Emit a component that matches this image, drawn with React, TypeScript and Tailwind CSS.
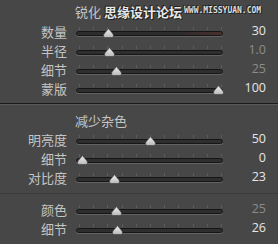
const cjk = { fontFamily: '"Noto Sans CJK SC", "Noto Sans", sans-serif' };
const num = { fontFamily: '"Open Sans", "Liberation Sans", sans-serif' };

type Row = { label: string; value: string; pos: number; dim?: boolean; warm?: boolean };

const sharpen: Row[] = [
  { label: "数量", value: "30", pos: 32, warm: true },
  { label: "半径", value: "1.0", pos: 33, dim: true },
  { label: "细节", value: "25", pos: 40, dim: true },
  { label: "蒙版", value: "100", pos: 142 },
];

const noise: Row[] = [
  { label: "明亮度", value: "50", pos: 74 },
  { label: "细节", value: "0", pos: 6 },
  { label: "对比度", value: "23", pos: 38 },
];

const color: Row[] = [
  { label: "颜色", value: "25", pos: 40, dim: true },
  { label: "细节", value: "26", pos: 41 },
];

const ticks = [0, 1, 2, 3, 4, 5, 6, 7, 8, 9, 10];

function Thumb() {
  return (
    <svg width="11" height="10" viewBox="0 0 11 10" className="block">
      <defs>
        <linearGradient id="tg" x1="0" y1="0" x2="0" y2="1">
          <stop offset="0" stopColor="#f2f2f2" />
          <stop offset="1" stopColor="#b8b8b8" />
        </linearGradient>
      </defs>
      <path d="M5.5 0.5 C6.5 2.5 10.5 5.5 10.5 7.5 C10.5 9 9.5 9.5 8.5 9.5 L2.5 9.5 C1.5 9.5 0.5 9 0.5 7.5 C0.5 5.5 4.5 2.5 5.5 0.5 Z" fill="url(#tg)" stroke="#3a3a3a" strokeWidth="0.6" />
    </svg>
  );
}

function Slider({ row }: { row: Row }) {
  return (
    <div className="flex h-[19px] items-center">
      <div className="w-[67px] whitespace-nowrap text-right text-[13px] leading-none text-[#c4c4c4]" style={cjk}>
        {row.label}
      </div>
      <div className="relative ml-[9px] h-full w-[147px]">
        {ticks.map((t) => (
          <div
            key={t}
            className="absolute top-[5px] h-[3px] w-px bg-[#5c5c5c]"
            style={{ left: 3 + t * 14.2 }}
          />
        ))}
        <div
          className={`absolute top-[9px] h-[5px] w-full rounded-full border border-[#161616] shadow-[0_1px_0_#626262] ${
            row.warm ? "bg-gradient-to-r from-[#2c2c2c] from-70% to-[#4a2f2c]" : "bg-[#2e2e2e]"
          }`}
        />
        <div className="absolute top-[6px]" style={{ left: row.pos - 5 }}>
          <Thumb />
        </div>
      </div>
      <div
        className={`ml-auto mr-[12px] text-[12.5px] leading-none ${row.dim ? "text-[#8c8c8c]" : "text-[#e6e6e6]"}`}
        style={num}
      >
        {row.value}
      </div>
    </div>
  );
}

export default function App() {
  return (
    <div className="h-[244px] w-[278px] overflow-hidden bg-[#474747]">
      <div className="flex h-[22px] items-center whitespace-nowrap">
        <span className="ml-[75px] shrink-0 text-[13px] leading-none text-[#c4c4c4]" style={cjk}>
          锐化
        </span>
        <span
          className="ml-[3px] shrink-0 text-[13px] font-bold leading-none text-[#e8e8e8] [text-shadow:0_0_1px_#111,1px_1px_0_#222,-1px_-1px_0_#222]"
          style={cjk}
        >
          思缘设计论坛
        </span>
        <span
          className="ml-[2px] shrink-0 text-[8px] font-bold leading-none text-[#dcdcdc] [text-shadow:1px_1px_0_#222,-1px_-1px_0_#222]"
          style={{ fontFamily: '"DejaVu Sans Mono", monospace' }}
        >
          WWW.MISSYUAN.COM
        </span>
      </div>
      {sharpen.map((r) => (
        <Slider key={r.label} row={r} />
      ))}
      <div className="mt-[5px] h-px bg-[#1b1b1b]" />
      <div className="h-px bg-[#595959]" />
      <div className="mt-[6px] flex h-[19px] items-center">
        <span className="ml-[75px] text-[13px] leading-none text-[#c4c4c4]" style={cjk}>
          减少杂色
        </span>
      </div>
      {noise.map((r) => (
        <Slider key={r.label + r.value} row={r} />
      ))}
      <div className="mt-[6px] h-px bg-[#3c3c3c]" />
      <div className="mt-[6px]">
        {color.map((r) => (
          <Slider key={r.label + r.value} row={r} />
        ))}
      </div>
    </div>
  );
}
